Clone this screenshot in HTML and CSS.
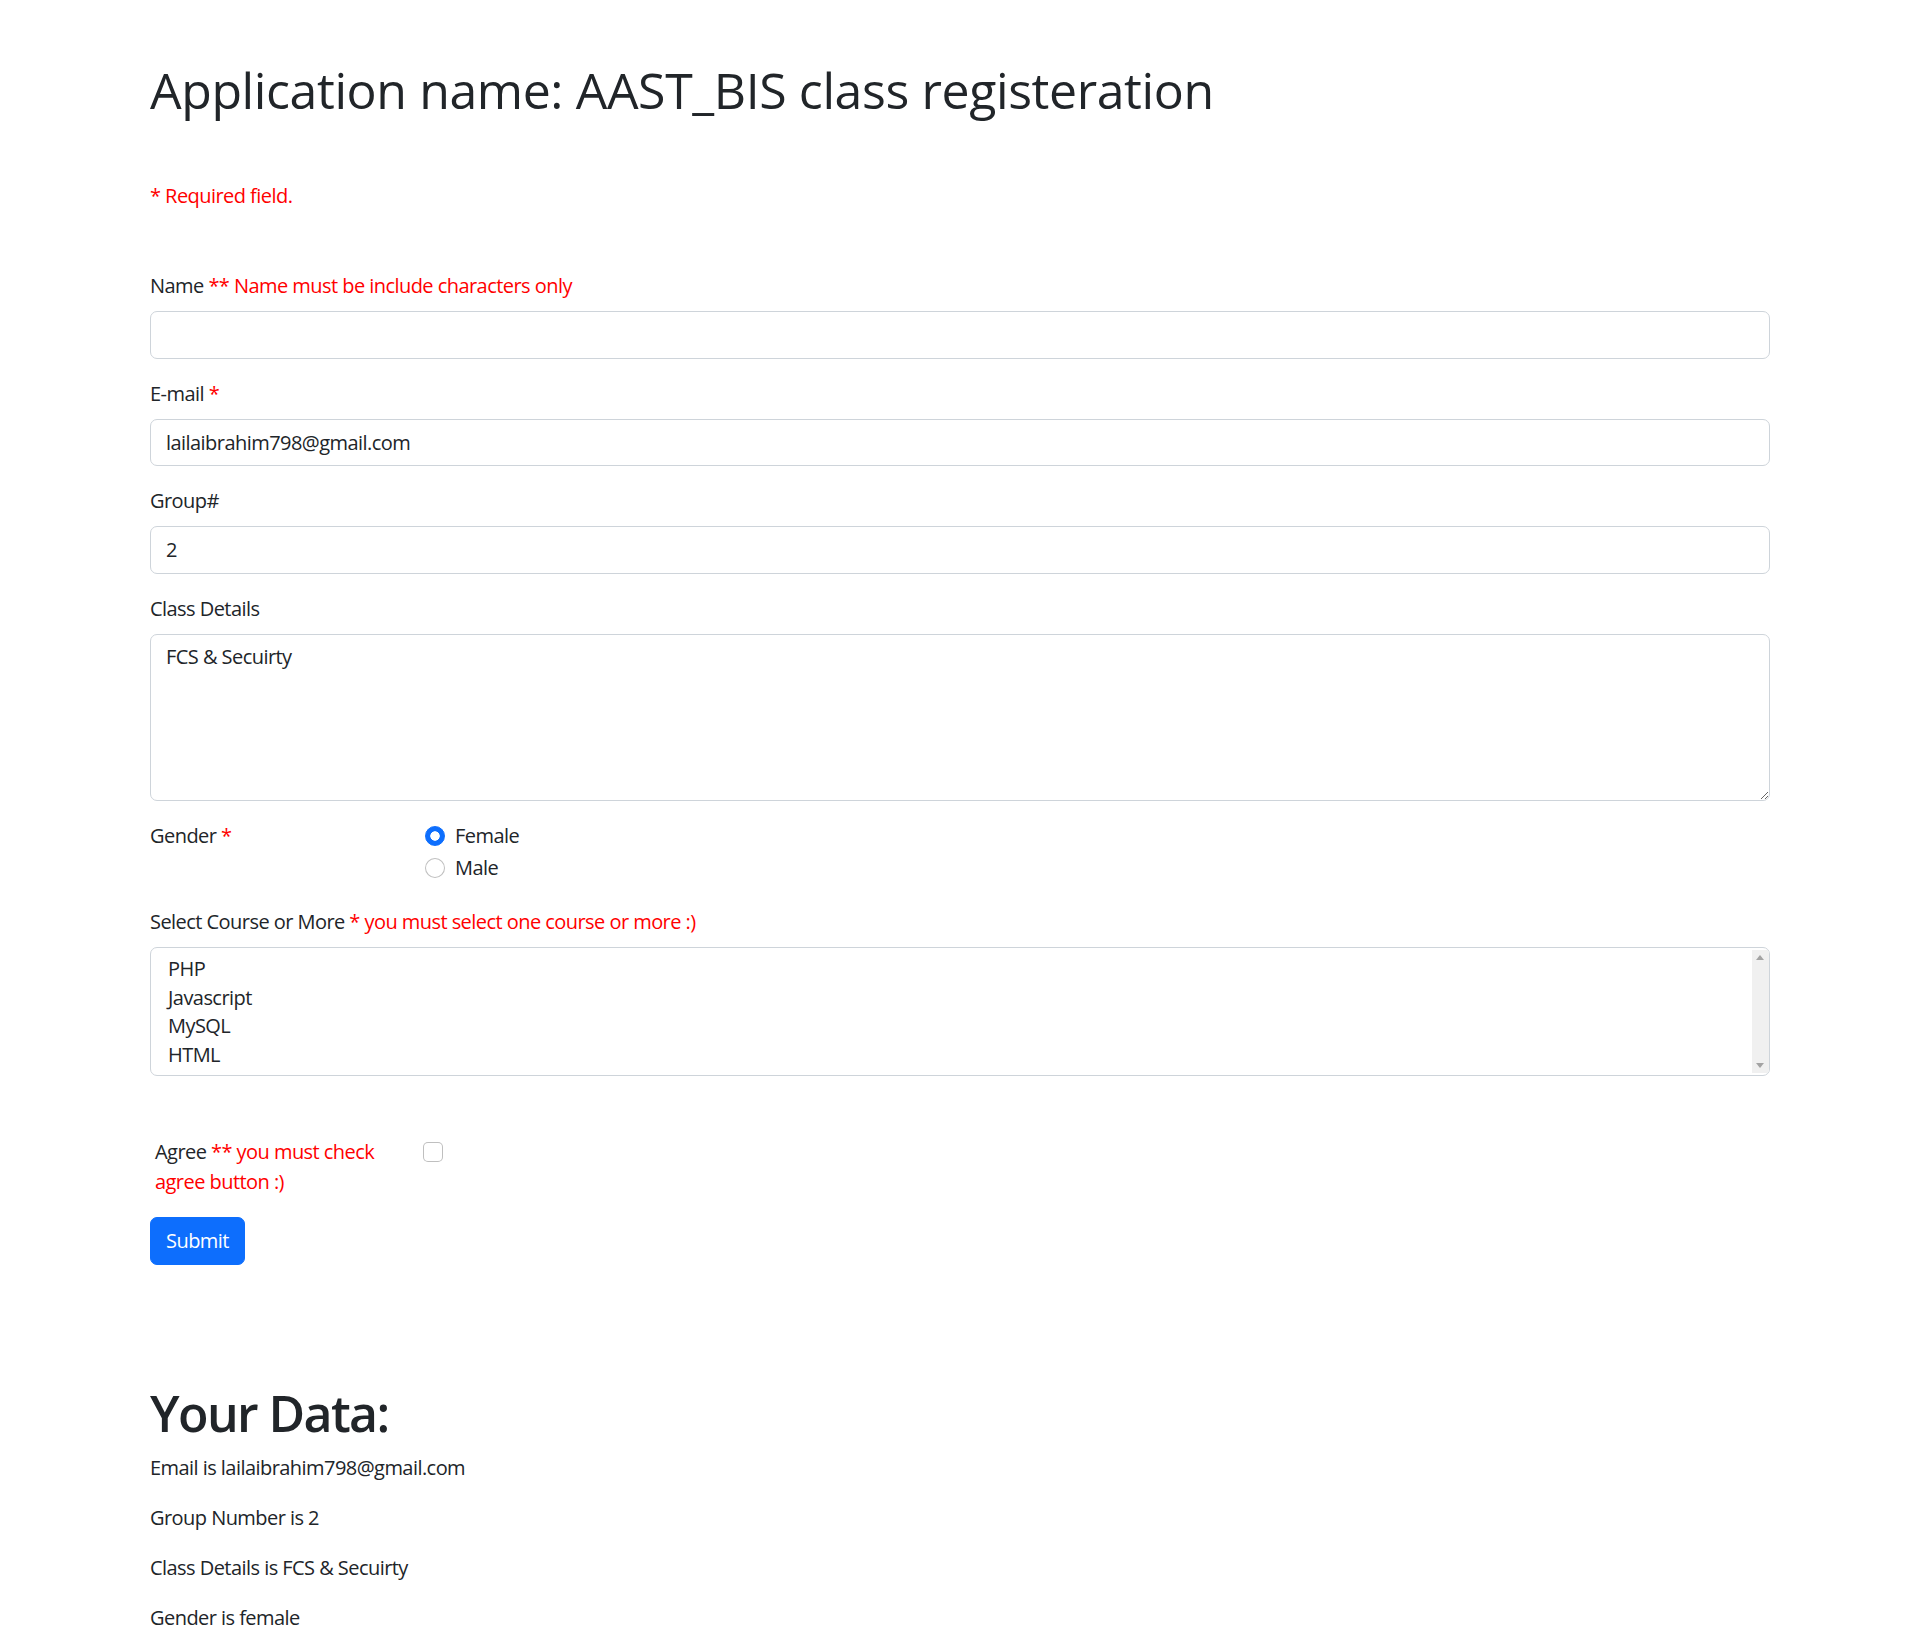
FILE: index.html
```html
<!DOCTYPE html>
<html lang="en">
<head>
<meta charset="utf-8">
<title>AAST_BIS class registeration</title>
<link rel="stylesheet" href="styles.css">
</head>
<body>
<div class="container">
  <h1 class="title">Application name: AAST_BIS class registeration</h1>
  <p class="required-note">* Required field.</p>

  <form class="reg-form">
    <div class="field">
      <label class="form-label" for="name">Name <span class="error">** Name must be include characters only</span></label>
      <input class="form-control" type="text" id="name" name="name" value="">
    </div>

    <div class="field">
      <label class="form-label" for="email">E-mail <span class="error">*</span></label>
      <input class="form-control" type="text" id="email" name="email" value="lailaibrahim798@gmail.com">
    </div>

    <div class="field">
      <label class="form-label" for="group">Group#</label>
      <input class="form-control" type="text" id="group" name="group" value="2">
    </div>

    <div class="field">
      <label class="form-label" for="details">Class Details</label>
      <textarea class="form-control textarea" id="details" name="details" rows="5">FCS &amp; Secuirty</textarea>
    </div>

    <div class="field gender-row">
      <div class="gender-label">Gender <span class="error">*</span></div>
      <div class="gender-options">
        <div class="form-check">
          <input class="check-input radio" type="radio" name="gender" id="female" value="female" checked>
          <label class="check-label" for="female">Female</label>
        </div>
        <div class="form-check">
          <input class="check-input radio" type="radio" name="gender" id="male" value="male">
          <label class="check-label" for="male">Male</label>
        </div>
      </div>
    </div>

    <div class="field">
      <label class="form-label" for="courses">Select Course or More <span class="error">* you must select one course or more :)</span></label>
      <div class="listbox" id="courses">
        <div class="listbox-options">
          <div class="option">PHP</div>
          <div class="option">Javascript</div>
          <div class="option">MySQL</div>
          <div class="option">HTML</div>
        </div>
        <div class="listbox-scroll">
          <span class="arrow up"></span>
          <span class="arrow down"></span>
        </div>
      </div>
    </div>

    <div class="agree-row">
      <label class="agree-label" for="agree"><span class="agree-line">Agree <span class="error">** you must check</span></span><span class="agree-line error">agree button :)</span></label>
      <div class="agree-box">
        <input class="check-input checkbox" type="checkbox" id="agree" name="agree">
      </div>
    </div>

    <button class="btn-submit" type="submit">Submit</button>
  </form>

  <h1 class="data-title">Your Data:</h1>
  <p class="data-line">Email is lailaibrahim798@gmail.com</p>
  <p class="data-line">Group Number is 2</p>
  <p class="data-line">Class Details is FCS &amp; Secuirty</p>
  <p class="data-line">Gender is female</p>
</div>
</body>
</html>
```

FILE: styles.css
```css
* { box-sizing: border-box; }

html, body {
  margin: 0;
  padding: 0;
  background: #fff;
}

body {
  font-family: "Open Sans", "Noto Sans", "Liberation Sans", sans-serif;
  font-size: 20px;
  line-height: 30px;
  letter-spacing: -0.55px;
  color: #212529;
}

.container {
  width: 1620px;
  margin: 0 auto;
  padding-top: 60px;
}

.title {
  margin: 0 0 61px;
  font-size: 50px;
  line-height: 60px;
  font-weight: 500;
  letter-spacing: -0.4px;
}

.required-note {
  margin: 0 0 60px;
  color: #ff0000;
}

.error { color: #ff0000; }

.field { margin-bottom: 20px; }

.form-label {
  display: block;
  margin-bottom: 10px;
}

.form-control {
  display: block;
  width: 100%;
  height: 47.5px;
  padding: 7.5px 15px;
  font: inherit;
  letter-spacing: inherit;
  color: #212529;
  background: #fff;
  border: 1.25px solid #ced4da;
  border-radius: 7px;
  outline: none;
}

.textarea {
  height: 167px;
  resize: vertical;
}

.gender-row {
  display: grid;
  grid-template-columns: 275px 1fr;
  margin-bottom: 21px;
}

.form-check {
  display: flex;
  align-items: flex-start;
  min-height: 30px;
  margin-bottom: 2.5px;
}

.check-input {
  appearance: none;
  -webkit-appearance: none;
  flex: none;
  width: 20px;
  height: 20px;
  margin: 5px 10px 0 0;
  border: 1.25px solid rgba(0, 0, 0, 0.25);
  background: #fff;
}

.radio { border-radius: 50%; }

.radio:checked {
  border-color: #0d6efd;
  background: radial-gradient(circle, #fff 0 4.4px, #0d6efd 5px);
}

.checkbox { border-radius: 5px; margin: 5px 0 0; }

.listbox {
  display: flex;
  height: 129.5px;
  border: 1.25px solid #ced4da;
  border-radius: 7px;
  overflow: hidden;
  background: #fff;
}

.listbox-options {
  flex: 1;
  padding: 7.5px 15px 7.5px 17px;
}

.option {
  height: 28.5px;
  line-height: 28.5px;
}

.listbox-scroll {
  position: relative;
  width: 17px;
  margin: 2px 0;
  background: #f0f0f0;
}

.arrow {
  position: absolute;
  left: 4px;
  width: 0;
  height: 0;
  border-left: 4.5px solid transparent;
  border-right: 4.5px solid transparent;
}

.arrow.up { top: 5px; border-bottom: 5px solid #a3a3a3; }
.arrow.down { bottom: 5px; border-top: 5px solid #a3a3a3; }

.agree-row {
  display: grid;
  grid-template-columns: 273px 1fr;
  margin-top: 61px;
  margin-bottom: 20px;
}

.agree-label {
  padding-left: 5px;
  width: 245px;
}

.agree-line { display: block; }

.btn-submit {
  display: block;
  height: 47.5px;
  padding: 7.5px 15px;
  font: inherit;
  letter-spacing: inherit;
  color: #fff;
  background: #0d6efd;
  border: 1.25px solid #0d6efd;
  border-radius: 7px;
}

.data-title {
  margin: 118px 0 10px;
  font-size: 50px;
  line-height: 60px;
  font-weight: 600;
  letter-spacing: -1.6px;
}

.data-line { margin: 0 0 20px; }
```
